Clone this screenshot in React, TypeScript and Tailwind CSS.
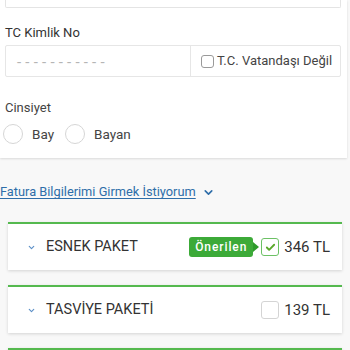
import { ChevronDown, Check } from 'lucide-react';

const packages = [
  { name: 'ESNEK PAKET', price: '346 TL', recommended: true, checked: true },
  { name: 'TASVİYE PAKETİ', price: '139 TL', recommended: false, checked: false },
  { name: 'EK PAKET', price: '99 TL', recommended: false, checked: false },
];

function Radio({ label }: { label: string }) {
  return (
    <label className="flex items-center gap-[9px]">
      <span className="shrink-0 w-[20px] h-[20px] rounded-full border border-[#d6d6d6] bg-white" />
      <span className="text-[13.5px] text-[#444]">{label}</span>
    </label>
  );
}

export default function App() {
  return (
    <div className="w-[350px] h-[350px] overflow-hidden bg-[#f8f8f8] font-['Roboto',sans-serif]">
      {/* form card */}
      <div className="w-[347px] bg-white px-[5px] pb-[13px] shadow-[0_1px_2px_rgba(0,0,0,0.12)]">
        <div className="h-[8px] border-x border-b border-[#e4e4e4] rounded-b-[2px] mr-[1px]" />

        <div className="mt-[15px] text-[13px] leading-[20px] text-[#333]">TC Kimlik No</div>
        <div className="mt-[2px] h-[32px] flex border border-[#e6e6e6] rounded-[2px] mr-[1px]">
          <div className="shrink-0 w-[185px] flex items-end pb-[7px] pl-[11px] border-r border-[#e6e6e6]">
            <span className="text-[15px] leading-[14px] text-[#b5b5b5] tracking-[4.2px]">-----------</span>
          </div>
          <div className="flex-1 flex items-center pl-[10px] gap-[3px] whitespace-nowrap">
            <span className="shrink-0 w-[13px] h-[13px] border border-[#9a9a9a] rounded-[3px]" />
            <span className="text-[13px] text-[#444]">T.C. Vatandaşı Değil</span>
          </div>
        </div>

        <div className="mt-[21px] text-[13px] leading-[20px] text-[#444]">Cinsiyet</div>
        <div className="mt-[5px] h-[22px] flex items-center gap-[11px] -ml-[2px]">
          <Radio label="Bay" />
          <Radio label="Bayan" />
        </div>
      </div>

      {/* invoice toggle */}
      <div className="mt-[24px] flex items-center gap-[6px] h-[20px]">
        <span className="text-[12.8px] text-[#2f6ea9] underline underline-offset-2">Fatura Bilgilerimi Girmek İstiyorum</span>
        <ChevronDown className="w-[13px] h-[13px] text-[#2f6ea9]" strokeWidth={3} />
      </div>

      {/* packages */}
      <div className="mt-[20px] mx-[8px] flex flex-col gap-[15px]">
        {packages.map((p) => (
          <div
            key={p.name}
            className="shrink-0 h-[48px] bg-white border-t-2 border-[#55b94f] shadow-[0_1px_3px_rgba(0,0,0,0.15)] flex items-center pl-[19px] pr-[12px]"
          >
            <ChevronDown className="w-[9px] h-[9px] text-[#5b8fc7]" strokeWidth={3} />
            <span className="ml-[10px] text-[14.5px] text-[#333]">{p.name}</span>
            <div className="ml-auto flex items-center">
              {p.recommended && (
                <div className="flex items-center">
                  <span className="h-[20px] px-[6px] rounded-[3px] bg-[#3caa38] text-white text-[12px] font-medium leading-[20px] tracking-[0.9px]">
                    Önerilen
                  </span>
                  <span className="w-0 h-0 border-y-[5px] border-y-transparent border-l-[6px] border-l-[#2e9a2b]" />
                </div>
              )}
              <span
                className={
                  p.checked
                    ? 'ml-[2px] w-[18px] h-[18px] rounded-[3px] border border-[#6cc165] bg-white flex items-center justify-center'
                    : 'ml-[2px] w-[18px] h-[18px] rounded-[3px] border border-[#d4d4d4] bg-white'
                }
              >
                {p.checked && <Check className="w-[11px] h-[11px] text-[#5aa82a]" strokeWidth={4} />}
              </span>
              <span className="ml-[5px] text-[15px] text-[#333]">{p.price}</span>
            </div>
          </div>
        ))}
      </div>
    </div>
  );
}
